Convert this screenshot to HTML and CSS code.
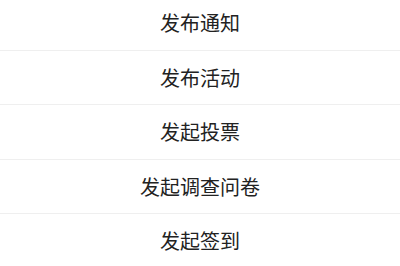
FILE: index.html
```html
<!DOCTYPE html>
<html>
<head>
    <meta charset="utf-8">
    <title>发布</title>
    <link rel="stylesheet" href="styles.css">
</head>
<body>
    <ul class="action-list">
        <li class="action-item">发布通知</li>
        <li class="action-item">发布活动</li>
        <li class="action-item">发起投票</li>
        <li class="action-item">发起调查问卷</li>
        <li class="action-item">发起签到</li>
    </ul>
</body>
</html>
```

FILE: styles.css
```css
body { margin: 0; background: #fff; font-family: "Noto Sans CJK SC", "Noto Sans", sans-serif; }
.action-list { list-style: none; margin: -4px 0 0; padding: 0; }
.action-item { height: 53.6px; line-height: 53.6px; text-align: center; font-size: 20px; color: #222; border-bottom: 1px solid #efefef; }
```
